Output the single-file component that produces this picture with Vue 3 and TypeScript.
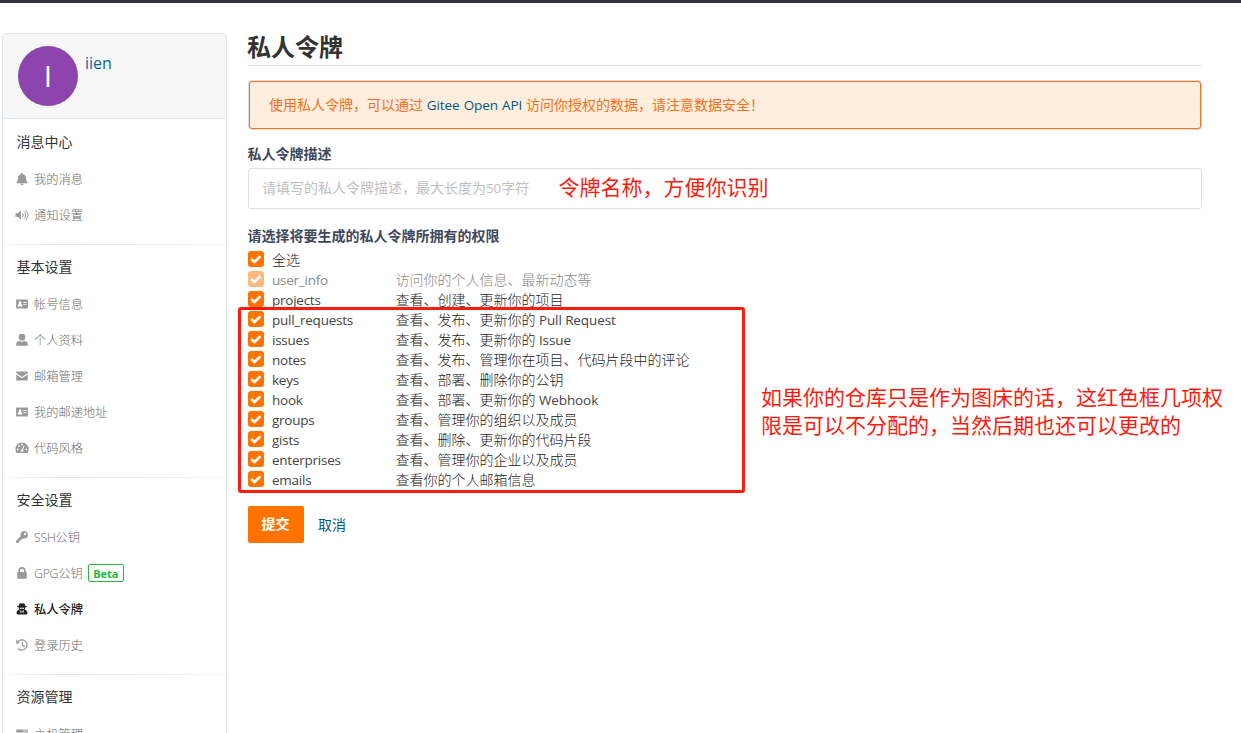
<script setup lang="ts">
interface MenuItem {
  icon: string
  label: string
  latin?: string
  badge?: string
  active?: boolean
}
interface MenuSection {
  title: string
  items: MenuItem[]
}
interface Scope {
  name: string
  before: string
  latin?: string
  disabled?: boolean
}

const sections: MenuSection[] = [
  {
    title: '消息中心',
    items: [
      { icon: 'bell', label: '我的消息' },
      { icon: 'volume', label: '通知设置' },
    ],
  },
  {
    title: '基本设置',
    items: [
      { icon: 'card', label: '帐号信息' },
      { icon: 'user', label: '个人资料' },
      { icon: 'mail', label: '邮箱管理' },
      { icon: 'card', label: '我的邮递地址' },
      { icon: 'gauge', label: '代码风格' },
    ],
  },
  {
    title: '安全设置',
    items: [
      { icon: 'key', latin: 'SSH', label: '公钥' },
      { icon: 'lock', latin: 'GPG', label: '公钥', badge: 'Beta' },
      { icon: 'spy', label: '私人令牌', active: true },
      { icon: 'history', label: '登录历史' },
    ],
  },
  {
    title: '资源管理',
    items: [{ icon: 'server', label: '主机管理' }],
  },
]

const scopes: Scope[] = [
  { name: 'user_info', before: '访问你的个人信息、最新动态等', disabled: true },
  { name: 'projects', before: '查看、创建、更新你的项目' },
  { name: 'pull_requests', before: '查看、发布、更新你的', latin: 'Pull Request' },
  { name: 'issues', before: '查看、发布、更新你的', latin: 'Issue' },
  { name: 'notes', before: '查看、发布、管理你在项目、代码片段中的评论' },
  { name: 'keys', before: '查看、部署、删除你的公钥' },
  { name: 'hook', before: '查看、部署、更新你的', latin: 'Webhook' },
  { name: 'groups', before: '查看、管理你的组织以及成员' },
  { name: 'gists', before: '查看、删除、更新你的代码片段' },
  { name: 'enterprises', before: '查看、管理你的企业以及成员' },
  { name: 'emails', before: '查看你的个人邮箱信息' },
]
</script>

<template>
  <div class="page">
    <div class="topbar"></div>
    <div class="body">
      <aside class="sidebar">
        <div class="profile">
          <div class="avatar">I</div>
          <a class="username">iien</a>
        </div>
        <section v-for="section in sections" :key="section.title" class="section">
          <h4 class="section-title">{{ section.title }}</h4>
          <a
            v-for="item in section.items"
            :key="item.label + item.icon"
            class="item"
            :class="{ active: item.active }"
          >
            <svg class="icon" viewBox="0 0 14 14" fill="currentColor">
              <g v-if="item.icon === 'bell'">
                <path d="M7 1a.9.9 0 0 0-.9.9v.3C4 2.600 3 4.200 3 6.200 3 8.600 2.200 9.400 1.700 9.900c-.5.6-.2 1.300.6 1.300h9.400c.8 0 1.100-.7.6-1.300-.5-.5-1.300-1.300-1.300-3.700 0-2-1-3.600-3.100-4V1.900A.9.9 0 0 0 7 1zM5.500 11.700a1.500 1.500 0 0 0 3 0z" />
              </g>
              <g v-else-if="item.icon === 'volume'">
                <path d="M.5 5.200h2.300L5.900 2.300v9.400L2.800 8.800H.5z" />
                <path d="M7.700 5.200q1.700 1.800 0 3.600M9.200 3.600q3.300 3.400 0 6.800M10.700 2q5 5 0 10" fill="none" stroke="currentColor" stroke-width="1" stroke-linecap="round" />
              </g>
              <path
                v-else-if="item.icon === 'card'"
                fill-rule="evenodd"
                d="M2.100 2.500h9.800c.6 0 1 .4 1 1v7c0 .6-.4 1-1 1H2.100c-.6 0-1-.4-1-1v-7c0-.6.4-1 1-1zM5 4.300a1.300 1.500 0 0 0-.8 2.700C3.100 7.400 2.600 8 2.600 9.400h4.900C7.500 8 7 7.400 5.900 7A1.300 1.500 0 0 0 5 4.300zM8.300 5v.9h3.300V5zM8.300 7.200v.9h3.300v-.9z"
              />
              <g v-else-if="item.icon === 'user'">
                <ellipse cx="7" cy="4.200" rx="3.300" ry="3.400" />
                <path d="M1.200 12.700V11c0-1.900 1.700-2.700 3.200-2.900 1.600.9 3.600.9 5.200 0 1.500.2 3.200 1 3.200 2.900v1.700z" />
              </g>
              <g v-else-if="item.icon === 'mail'">
                <path d="M1.200 3.500c0-.6.4-1 1-1h9.600c.6 0 1 .4 1 1v.6L7 8 1.200 4.100z" />
                <path d="M1.200 5.400 7 9.300l5.800-3.900v5.100c0 .6-.4 1-1 1H2.200c-.6 0-1-.4-1-1z" />
              </g>
              <path
                v-else-if="item.icon === 'gauge'"
                fill-rule="evenodd"
                d="M7 1.600A6.600 6.600 0 0 0 .4 8.200c0 1.300.4 2.500 1 3.500.2.300.4.400.7.400h9.800c.3 0 .5-.1.700-.4.600-1 1-2.200 1-3.500A6.600 6.600 0 0 0 7 1.600zM2.700 7.400a.9.900 0 1 1 0 1.800.9.900 0 0 1 0-1.800zM4 4.300A.9.900 0 1 1 4 6.100.9.900 0 0 1 4 4.300zM7 2.800a.9.900 0 1 1 0 1.800.9.900 0 0 1 0-1.800zM11.300 7.400a.9.900 0 1 1 0 1.800.9.900 0 0 1 0-1.800zM8.600 4.800l.9.300L8 8.600c.6.400.8 1 .5 1.700-.7 1.300-2.700.8-2.700-.6 0-.8.6-1.300 1.300-1.400z"
              />
              <path
                v-else-if="item.icon === 'key'"
                fill-rule="evenodd"
                d="M9.100 1a3.800 3.800 0 0 1 0 7.600c-.5 0-.9-.1-1.300-.2L6.700 9.500H5.500v1.300H4.300v1.300L3.400 13H1.600c-.3 0-.5-.2-.5-.5v-1.800l4.500-4.500A3.800 3.800 0 0 1 9.100 1zm1 1.700a1.200 1.200 0 1 0 0 2.400 1.200 1.200 0 0 0 0-2.400z"
              />
              <path
                v-else-if="item.icon === 'lock'"
                fill-rule="evenodd"
                d="M3.300 6V4.600a3.700 3.500 0 0 1 7.400 0V6h.3c.5 0 .8.300.8.800V12c0 .5-.3.800-.8.800H3c-.5 0-.8-.3-.8-.8V6.800c0-.5.3-.8.800-.8zm1.700 0h4V4.600a2 1.900 0 0 0-4 0z"
              />
              <path
                v-else-if="item.icon === 'spy'"
                fill-rule="evenodd"
                d="M5 1.300c.7-.3 1.300.3 2 .3s1.300-.6 2-.3c.8.300 1 1.500 1.200 2.500 1 .2 1.700.5 1.700.8 0 .4-.7.700-1.700.9.100.9-.1 1.600-.6 2.300 1.700.2 2.800 1.200 2.800 3.100 0 1.200-.6 1.700-1.600 1.700H3.200c-1 0-1.600-.5-1.600-1.700 0-1.900 1.100-2.900 2.800-3.100-.5-.7-.7-1.400-.6-2.300-1-.2-1.700-.5-1.700-.9 0-.3.700-.6 1.700-.8C4 2.800 4.200 1.600 5 1.300zM4.700 5.700c.2.900.6 1.300 1.200 1.200.5 0 .7-.4.900-.7h.4c.2.300.4.700.9.700.6.100 1-.3 1.200-1.200zM5 8.600l.9 3 .7-2.200-.4-.8zm4 0H7.800l-.4.8.7 2.200z"
              />
              <g v-else-if="item.icon === 'history'">
                <path d="M3 3.700A5.100 5.100 0 1 1 3.400 10.700M7.400 4.300v3.200l2 1.100" fill="none" stroke="currentColor" stroke-width="1.200" stroke-linecap="round" />
                <path d="M1.100 1.600v4h4z" />
              </g>
              <path
                v-else
                fill-rule="evenodd"
                d="M1.200 2.500h11.600v2.900H1.200zm6.500 1v.8h4v-.8zM1.200 6.200h11.600v2.900H1.200zM1.200 9.900h11.600v2.900H1.200z"
              />
            </svg>
            <span><span v-if="item.latin" class="latin">{{ item.latin }}</span>{{ item.label }}</span>
            <span v-if="item.badge" class="badge">{{ item.badge }}</span>
          </a>
        </section>
      </aside>

      <main class="content">
        <h1 class="title">私人令牌</h1>
        <div class="notice">
          使用私人令牌，可以通过 <a class="link latin">Gitee Open API</a> 访问你授权的数据，请注意数据安全！
        </div>
        <div class="label">私人令牌描述</div>
        <div class="field">
          <span class="placeholder">请填写的私人令牌描述，最大长度为<span class="latin">50</span>字符</span>
          <span class="note field-note">令牌名称，方便你识别</span>
        </div>
        <div class="label scopes-label">请选择将要生成的私人令牌所拥有的权限</div>
        <div class="scopes">
          <div class="scope">
            <span class="check"><svg viewBox="0 0 16 16"><path d="M3.200 8 6.500 11l5.900-5.700" /></svg></span>
            <span class="desc">全选</span>
          </div>
          <div v-for="scope in scopes" :key="scope.name" class="scope" :class="{ disabled: scope.disabled }">
            <span class="check"><svg viewBox="0 0 16 16"><path d="M3.200 8 6.500 11l5.900-5.700" /></svg></span>
            <span class="latin name">{{ scope.name }}</span>
            <span class="desc">{{ scope.before }}<span v-if="scope.latin" class="latin">&nbsp;{{ scope.latin }}</span></span>
          </div>
          <div class="red-frame"></div>
          <p class="note side-note">如果你的仓库只是作为图床的话，这红色框几项权限是可以不分配的，当然后期也还可以更改的</p>
        </div>
        <div class="actions">
          <button class="submit">提交</button>
          <a class="link cancel">取消</a>
        </div>
      </main>
    </div>
  </div>
</template>

<style>
html,
body {
  margin: 0;
  overflow: hidden;
  background: #fff;
}
</style>

<style scoped>
.page {
  box-sizing: border-box;
  width: 1241px;
  height: 733px;
  overflow: hidden;
  font-family: 'Noto Sans CJK SC', sans-serif;
  font-size: 14px;
  font-weight: 300;
  line-height: 20px;
  color: #1c1c1c;
  white-space: nowrap;
}
.latin {
  font-family: 'Open Sans', sans-serif;
  font-weight: 400;
  font-size: 13.500px;
  letter-spacing: -0.1px;
}
.scope .latin {
  color: #444;
}
.scope .name {
  letter-spacing: -0.25px;
}
.topbar {
  height: 3px;
  background: #31333f;
}
.body {
  display: flex;
  align-items: flex-start;
  padding: 30px 0 0 2px;
}
.sidebar {
  box-sizing: border-box;
  width: 225px;
  height: 760px;
  border: 1px solid #dfe7ee;
  border-radius: 4px;
}
.profile {
  display: flex;
  gap: 7px;
  box-sizing: border-box;
  height: 85px;
  padding: 12px 0 0 15px;
  background: #f7f7f7;
  border-bottom: 1px solid #dfe7ee;
  border-radius: 3px 3px 0 0;
}
.avatar {
  width: 60px;
  height: 60px;
  border-radius: 50%;
  background: #8e44ad;
  color: #fff;
  font-family: 'Open Sans', sans-serif;
  font-weight: 400;
  font-size: 30px;
  line-height: 60px;
  text-align: center;
}
.username {
  padding-top: 7px;
  font-family: 'Open Sans', sans-serif;
  font-weight: 400;
  font-size: 16px;
  color: #106590;
}
.section {
  padding: 12px 0 11px;
  border-top: 1px solid transparent;
  border-image: linear-gradient(to right, #f7f7f7, #e4e4e6 25%, #eee 75%, #f7f7f7) 1;
  border-image-width: 1px 0 0;
}
.profile + .section {
  border-image: none;
}
.section-title {
  height: 20px;
  margin: 0 0 9px;
  padding-left: 13.500px;
  font-size: 14px;
  font-weight: 400;
  line-height: 18px;
  color: #333;
}
.item {
  display: flex;
  align-items: center;
  height: 36px;
  padding-left: 12px;
  font-size: 12.250px;
  color: #6c6c6c;
}
.item .latin {
  font-size: 12.250px;
  font-weight: 300;
  letter-spacing: -0.2px;
}
.icon {
  flex: none;
  width: 14px;
  height: 14px;
  margin-right: 5px;
  color: #999;
}
.item.active,
.item.active .icon {
  color: #222;
}
.item.active {
  font-weight: 500;
}
.badge {
  box-sizing: border-box;
  width: 36px;
  height: 18px;
  margin-left: 5px;
  border: 1px solid #21ba45;
  border-radius: 2px;
  color: #21ba45;
  font-family: 'Open Sans', sans-serif;
  font-weight: 700;
  font-size: 11px;
  line-height: 17px;
  text-align: center;
}
.content {
  width: 954px;
  margin-left: 21px;
}
.title {
  box-sizing: border-box;
  height: 33px;
  margin: 0 0 15px;
  border-bottom: 1px solid #e2e2e5;
  font-size: 24px;
  font-weight: 700;
  line-height: 26px;
  text-indent: -1px;
  color: #333;
}
.notice {
  box-sizing: border-box;
  height: 48px;
  margin: 0 1px;
  padding-left: 19px;
  border: 1px solid #f2711c;
  border-radius: 3px;
  box-shadow: 0 0 0 1px #dde0e3;
  background: #ffedde;
  color: #f2711c;
  font-weight: 400;
  line-height: 44px;
  word-spacing: 0.700px;
}
.link {
  color: #005980;
  font-weight: 400;
}
.label {
  height: 20px;
  margin-top: 15px;
  color: #40485b;
  font-weight: 700;
  line-height: 18px;
  text-indent: -0.500px;
}
.field {
  display: flex;
  align-items: center;
  box-sizing: border-box;
  height: 41px;
  margin-top: 4px;
  padding-left: 13px;
  border: 1px solid #dfdfe6;
  border-radius: 3px;
}
.placeholder {
  width: 296.500px;
  padding-bottom: 2px;
  color: #bfbfbf;
  font-weight: 400;
}
.note {
  color: #ff1a0e;
  font-size: 21px;
  font-weight: 400;
  line-height: 28px;
}
.field-note {
  padding-bottom: 5px;
}
.scopes-label {
  margin-top: 17px;
}
.scopes {
  position: relative;
  margin-top: 4px;
}
.scope {
  display: grid;
  grid-template-columns: 24px 123.500px auto;
  height: 20px;
}
.desc {
  line-height: 18px;
}
.scope.disabled,
.scope.disabled .latin {
  color: #888;
}
.check {
  width: 16px;
  height: 16px;
  margin-top: 1px;
  border-radius: 3px;
  background: #fe7300;
}
.disabled .check {
  opacity: 0.5;
}
.check svg {
  display: block;
  width: 16px;
  height: 16px;
  fill: none;
  stroke: #fff;
  stroke-width: 2.600;
}
.red-frame {
  position: absolute;
  left: -10px;
  top: 57px;
  box-sizing: border-box;
  width: 507px;
  height: 186px;
  border: 3px solid #ff1a0e;
  border-radius: 3px;
}
.side-note {
  position: absolute;
  left: 513px;
  top: 132px;
  width: 470px;
  margin: 0;
  white-space: normal;
}
.actions {
  display: flex;
  align-items: center;
  gap: 14px;
  margin-top: 16px;
}
.submit {
  width: 56px;
  height: 37px;
  padding: 0 1px 3px 0;
  border: 0;
  border-radius: 2px;
  background: #fe7300;
  color: #fff;
  font-family: inherit;
  font-size: 14px;
  font-weight: 700;
}
.cancel {
  padding-bottom: 2px;
}
</style>
